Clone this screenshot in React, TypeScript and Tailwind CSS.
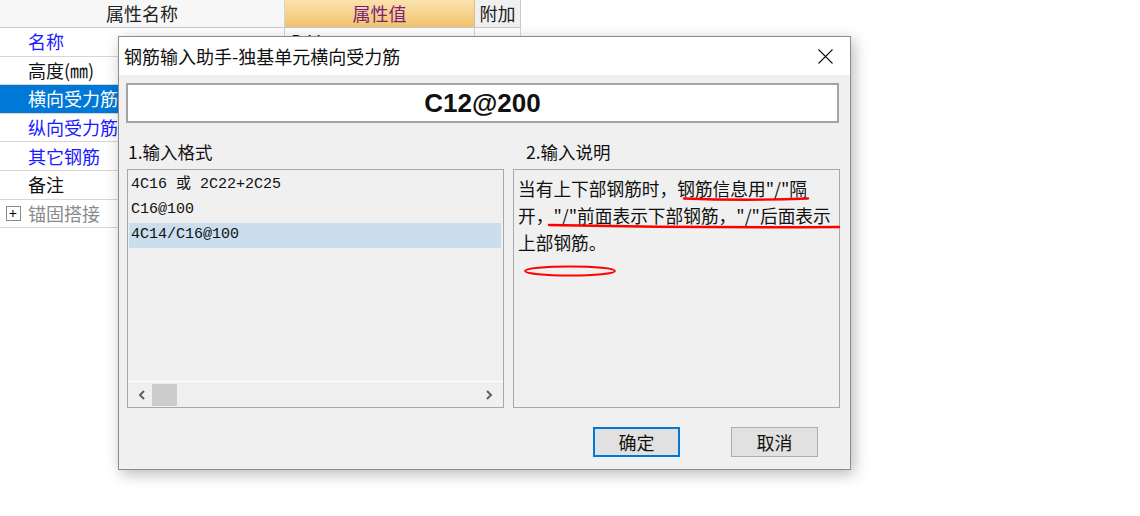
import React from 'react';

const CJK = '"Noto Sans CJK SC", "Microsoft YaHei", sans-serif';

type Row = {
  label: string;
  tone: 'blue' | 'black' | 'gray';
  selected?: boolean;
  expand?: boolean;
  value?: string;
};

const ROWS: Row[] = [
  { label: '名称', tone: 'blue', value: 'DJJ-1' },
  { label: '高度(㎜)', tone: 'black' },
  { label: '横向受力筋', tone: 'black', selected: true },
  { label: '纵向受力筋', tone: 'blue' },
  { label: '其它钢筋', tone: 'blue' },
  { label: '备注', tone: 'black' },
  { label: '锚固搭接', tone: 'gray', expand: true },
];

const FORMATS = ['4C16 或 2C22+2C25', 'C16@100', '4C14/C16@100'];

function PropertyTable() {
  return (
    <div className="w-[521px] text-[18px]" style={{ fontFamily: CJK }}>
      {/* header */}
      <div className="grid h-[28px] grid-cols-[285px_190px_46px] border-b border-[#c9c9c9]">
        <div className="flex items-center justify-center border-r border-[#d4d4d4] bg-[#f7f7f7] text-[#222]">
          属性名称
        </div>
        <div className="flex items-center justify-center border-r border-[#d9c08a] bg-gradient-to-b from-[#fbe2ae] to-[#f1c36c] text-[#7a1f78]">
          属性值
        </div>
        <div className="flex items-center justify-center border-r border-[#c9c9c9] bg-[#f0f0f0] text-[#222]">
          附加
        </div>
      </div>

      {ROWS.map((row) => (
        <div
          key={row.label}
          className="grid h-[28.6px] grid-cols-[285px_190px_46px] border-b border-[#d6d6d6]"
        >
          <div
            className={
              'flex items-center border-r border-[#d6d6d6] ' +
              (row.selected ? 'bg-[#0078d7] text-white' : '')
            }
          >
            <div className="flex w-[28px] justify-center">
              {row.expand && (
                <span className="ml-[-2px] flex h-[15px] w-[15px] items-center justify-center border border-[#8a8a8a] bg-white text-[14px] leading-none text-black">
                  +
                </span>
              )}
            </div>
            <span
              className={
                row.selected
                  ? ''
                  : row.tone === 'blue'
                    ? 'text-[#1a1aff]'
                    : row.tone === 'gray'
                      ? 'text-[#8a8a8a]'
                      : 'text-[#111]'
              }
            >
              {row.label}
            </span>
          </div>
          <div className="flex items-center border-r border-[#d6d6d6] pl-[6px] text-[#111]">
            {row.value}
          </div>
          <div className="border-r border-[#d6d6d6]" />
        </div>
      ))}
    </div>
  );
}

function CloseIcon() {
  return (
    <svg width="15" height="15" viewBox="0 0 15 15">
      <path d="M0.5 0.5 L14.5 14.5 M14.5 0.5 L0.5 14.5" stroke="#111" strokeWidth="1.1" />
    </svg>
  );
}

function Chevron({ dir }: { dir: 'left' | 'right' }) {
  return (
    <svg width="8" height="10" viewBox="0 0 8 10">
      <path
        d={dir === 'left' ? 'M6 1 L2 5 L6 9' : 'M2 1 L6 5 L2 9'}
        stroke="#606060"
        strokeWidth="2"
        fill="none"
      />
    </svg>
  );
}

function RebarDialog() {
  return (
    <div
      className="absolute left-[118px] top-[36px] flex h-[434px] w-[733px] flex-col border border-[#8c8c8c] bg-[#f0f0f0] shadow-[3px_4px_14px_rgba(0,0,0,0.28)]"
      style={{ fontFamily: CJK }}
    >
      {/* title bar */}
      <div className="flex h-[38px] items-center justify-between bg-white pl-[5px] pr-[17px]">
        <span className="text-[18px] text-[#111]">钢筋输入助手-独基单元横向受力筋</span>
        <CloseIcon />
      </div>

      <div className="flex flex-1 flex-col px-[7px] pt-[8px]">
        {/* value input */}
        <div className="flex h-[40px] w-[713px] items-center justify-center border-2 border-[#a3a3a3] bg-white">
          <span
            className="text-[26px] font-bold text-[#111]"
            style={{ fontFamily: '"Liberation Sans", Arial, sans-serif' }}
          >
            C12@200
          </span>
        </div>

        {/* section labels */}
        <div className="mt-[16px] flex h-[30px] items-start text-[17.5px] text-[#111]">
          <span className="ml-[2px] w-[386px]">1.输入格式</span>
          <span className="ml-[12px]">2.输入说明</span>
        </div>

        <div className="flex gap-[9px] pl-[1px]">
          {/* format list */}
          <div className="flex h-[239px] w-[377px] flex-col border border-[#a9a9a9] bg-[#f0f0f0]">
            <div
              className="flex flex-col pt-[3px] text-[15px] text-[#111]"
              style={{ fontFamily: '"Liberation Mono", "Noto Sans CJK SC", monospace' }}
            >
              {FORMATS.map((f, i) => (
                <div
                  key={f}
                  className={
                    'mx-[1px] flex h-[25px] items-center pl-[2px] ' +
                    (i === 2 ? 'mr-[2px] bg-[#cbdeee]' : '')
                  }
                >
                  {f}
                </div>
              ))}
            </div>
            {/* horizontal scrollbar */}
            <div className="mt-auto flex h-[26px] items-center border-t border-white px-[10px]">
              <Chevron dir="left" />
              <div className="ml-[6px] h-[22px] w-[25px] bg-[#cdcdcd]" />
              <div className="flex-1" />
              <Chevron dir="right" />
            </div>
          </div>

          {/* explanation */}
          <div className="relative h-[239px] w-[327px] border border-[#a9a9a9] bg-[#f0f0f0] pl-[4px] pt-[5px] text-[17.7px] leading-[27px] text-[#111]">
            <div className="whitespace-nowrap">当有上下部钢筋时，钢筋信息用"/"隔</div>
            <div className="whitespace-nowrap">开，"/"前面表示下部钢筋，"/"后面表示</div>
            <div>上部钢筋。</div>
            <svg
              className="pointer-events-none absolute left-0 top-0"
              width="327"
              height="239"
              viewBox="0 0 327 239"
            >
              <path
                d="M170 28.5 Q 232 31 294 28.5"
                stroke="#ff0000"
                strokeWidth="2.4"
                fill="none"
                strokeLinecap="round"
              />
              <path
                d="M35 55 Q 180 58 325 57"
                stroke="#ff0000"
                strokeWidth="2.4"
                fill="none"
                strokeLinecap="round"
              />
              <ellipse cx="56" cy="101" rx="45" ry="4.5" stroke="#ff0000" strokeWidth="2" fill="none" />
            </svg>
          </div>
        </div>

        {/* buttons */}
        <div className="mt-[19px] flex pl-[467px] text-[18px] text-[#111]">
          <button
            type="button"
            className="flex h-[30px] w-[87px] items-center justify-center border-2 border-[#0078d7] bg-[#e1e1e1]"
          >
            确定
          </button>
          <button
            type="button"
            className="ml-[51px] flex h-[30px] w-[87px] items-center justify-center border border-[#adadad] bg-[#e1e1e1]"
          >
            取消
          </button>
        </div>
      </div>
    </div>
  );
}

export default function App() {
  return (
    <div className="relative h-[516px] w-[1140px] overflow-hidden bg-white">
      <PropertyTable />
      <RebarDialog />
    </div>
  );
}
